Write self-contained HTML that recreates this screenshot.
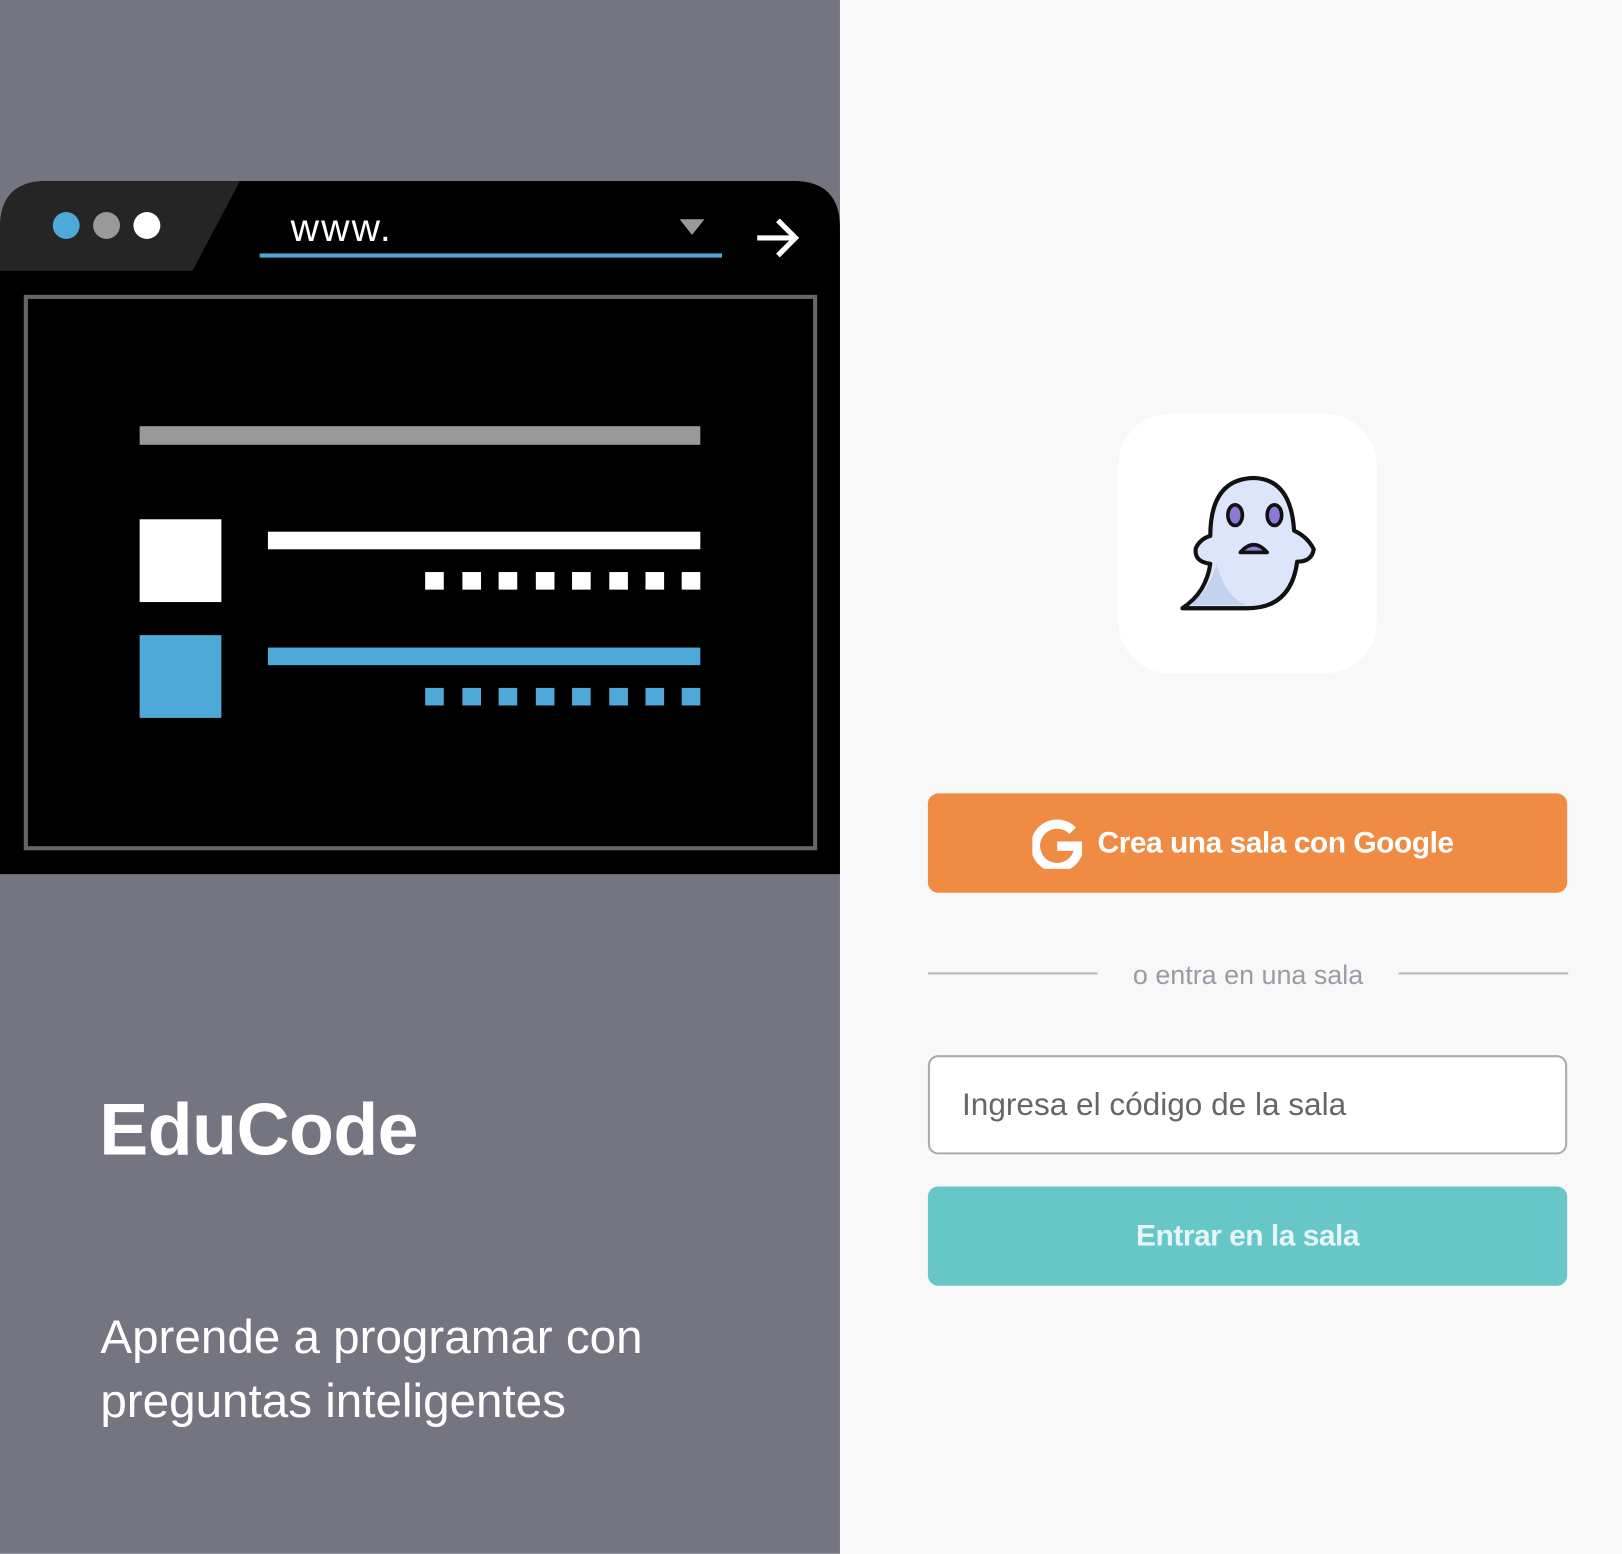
<!DOCTYPE html>
<html><head><meta charset="utf-8"><style>
html,body{margin:0;padding:0;width:1622px;height:1554px;overflow:hidden;background:#f8f8f8;font-family:"Liberation Sans",sans-serif}
#w{position:absolute;left:0;top:0;width:1568px;height:1502px;transform:scale(1.03444);transform-origin:0 0}
.a{position:absolute}
</style></head><body><div id="w">
<div class="a" style="left:0;top:0;width:812px;height:1502px;background:#757481"></div>
<svg class="a" style="left:0;top:0" width="812" height="860" viewBox="0 0 812 860">
<path d="M0 220 Q0 175 45 175 L767 175 Q812 175 812 220 L812 845 L0 845 Z" fill="#000"/>
<path d="M0 220 Q0 175 45 175 L232 175 L186 262 L0 262 Z" fill="#252525"/>
<circle cx="64" cy="218" r="13" fill="#4fa9d8"/><circle cx="103" cy="218" r="13" fill="#999"/><circle cx="142" cy="218" r="13" fill="#fff"/>
<text x="281" y="233" fill="#fff" font-family="Liberation Sans" font-size="38" letter-spacing="2">www.</text>
<rect x="251" y="245" width="447" height="4" fill="#4fa9d8"/>
<path d="M657 212 L681 212 L669 227 Z" fill="#999"/>
<path d="M732 230 L768 230 M752 213 L769 230 L752 247" stroke="#fff" stroke-width="5" fill="none"/>
<rect x="25" y="287" width="763" height="533" fill="none" stroke="#666" stroke-width="4"/>
<rect x="135" y="412" width="542" height="18" fill="#999"/>
<rect x="135" y="502" width="79" height="80" fill="#fff"/>
<rect x="259" y="514" width="418" height="17" fill="#fff"/>
<rect x="135" y="614" width="79" height="80" fill="#4fa9d8"/>
<rect x="259" y="626" width="418" height="17" fill="#4fa9d8"/>
<g fill="#fff"><rect x="411" y="553" width="18" height="17"/><rect x="447" y="553" width="18" height="17"/><rect x="482" y="553" width="18" height="17"/><rect x="518" y="553" width="18" height="17"/><rect x="553" y="553" width="18" height="17"/><rect x="589" y="553" width="18" height="17"/><rect x="624" y="553" width="18" height="17"/><rect x="659" y="553" width="18" height="17"/></g>
<g fill="#4fa9d8"><rect x="411" y="665" width="18" height="17"/><rect x="447" y="665" width="18" height="17"/><rect x="482" y="665" width="18" height="17"/><rect x="518" y="665" width="18" height="17"/><rect x="553" y="665" width="18" height="17"/><rect x="589" y="665" width="18" height="17"/><rect x="624" y="665" width="18" height="17"/><rect x="659" y="665" width="18" height="17"/></g>
</svg>
<div class="a" style="left:96px;top:1052px;font-size:71px;font-weight:bold;color:#fff;letter-spacing:-0.5px">EduCode</div>
<div class="a" style="left:97px;top:1261px;font-size:46px;line-height:62px;color:#fff">Aprende a programar con<br>preguntas inteligentes</div>

<div class="a" style="left:1081px;top:400px;width:250px;height:251px;background:#fff;border-radius:50px"></div>
<svg class="a" style="left:1136px;top:455px" width="140" height="140" viewBox="0 0 140 140">
<path d="M7 133 Q30 118 34 90 Q18 88 20 75 Q24 66 34 63 Q34 8 76 7 Q112 8 115 58 Q128 64 134 76 Q132 88 118 88 Q112 133 70 133 Z" fill="#dde5fa" stroke="#111" stroke-width="4" stroke-linejoin="round"/>
<path d="M14 130 Q34 115 40 90 Q50 125 70 130 Z" fill="#c4d2f0"/>
<ellipse cx="58" cy="43" rx="7" ry="10" fill="#8d7ad6" stroke="#111" stroke-width="3.5"/>
<ellipse cx="96" cy="43" rx="7" ry="10" fill="#8d7ad6" stroke="#111" stroke-width="3.5"/>
<path d="M63 79 Q76 64 89 79 Z" fill="#8d7ad6" stroke="#111" stroke-width="3.5" stroke-linejoin="round"/>
</svg>

<div class="a" style="left:897px;top:767px;width:618px;height:96px;background:#f08b43;border-radius:10px"></div>
<svg class="a" style="left:998px;top:792px" width="48" height="48" viewBox="0 0 48 48">
<path d="M39 11 A21 21 0 1 0 45 26 L24 26" fill="none" stroke="#fff" stroke-width="9"/>
</svg>
<div class="a" style="left:1061px;top:799px;font-size:29px;font-weight:bold;color:#fff;letter-spacing:-0.5px">Crea una sala con Google</div>

<div class="a" style="left:897px;top:940px;width:164px;height:2px;background:#b5b5b5"></div>
<div class="a" style="left:1352px;top:940px;width:164px;height:2px;background:#b5b5b5"></div>
<div class="a" style="left:1061px;top:927px;width:291px;text-align:center;font-size:26px;color:#9b9aa5">o entra en una sala</div>

<div class="a" style="left:897px;top:1020px;width:614px;height:92px;border:2px solid #aaa;border-radius:10px;background:#fff"></div>
<div class="a" style="left:930px;top:1051px;font-size:30.5px;color:#666">Ingresa el código de la sala</div>

<div class="a" style="left:897px;top:1147px;width:618px;height:96px;background:#66c6c8;border-radius:10px"></div>
<div class="a" style="left:897px;top:1179px;width:618px;text-align:center;font-size:29px;font-weight:bold;color:#e6f5f5;letter-spacing:-0.5px">Entrar en la sala</div>
</div></body></html>
